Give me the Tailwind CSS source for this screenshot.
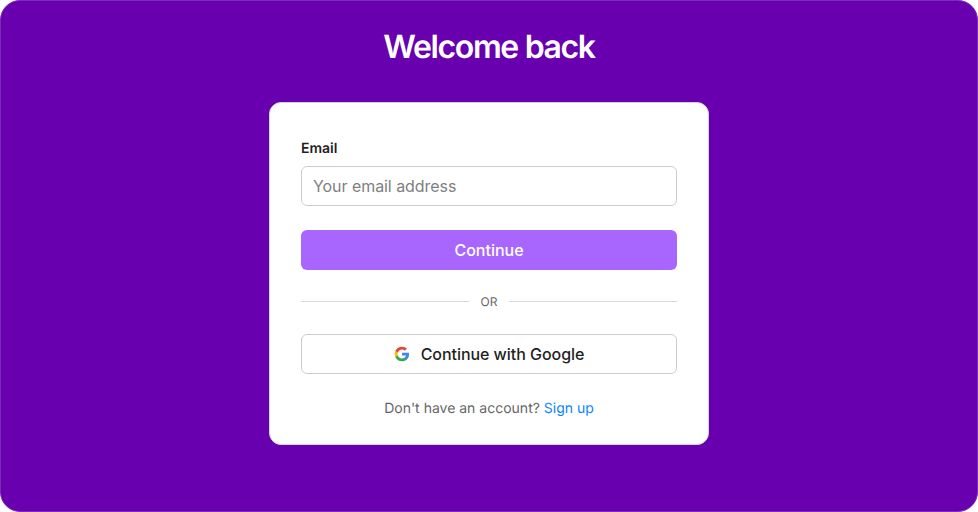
<!DOCTYPE html>
<html lang="en">
<head>
<meta charset="UTF-8" />
<title>Welcome back</title>
<script src="https://cdn.jsdelivr.net/npm/@tailwindcss/browser@4"></script>
</head>
<body class="bg-white font-['Inter',sans-serif] antialiased [text-rendering:geometricPrecision]">
<main class="w-[978px] h-[512px] rounded-[20px] bg-[#6800b0] border border-[#7a2bb8] flex flex-col items-center pt-[23px] overflow-hidden">
  <h1 class="text-[32px] leading-[46px] font-semibold tracking-[-1.36px] text-white">Welcome back</h1>
  <div class="w-[440px] h-[343px] mt-[32px] bg-white rounded-xl border border-[#d4d4d4] px-[31px] pt-[36px]">
    <label for="email" class="block text-sm leading-5 font-semibold text-[#1f1f1f]">Email</label>
    <input id="email" type="text" placeholder="Your email address" class="mt-[7px] block w-full h-10 px-[11px] rounded-md border border-[#cccccc] text-base tracking-[-0.06px] outline-none placeholder:text-[#808080]" />
    <button class="mt-6 block w-full h-10 rounded-md bg-[#a866ff] text-white text-base font-medium">Continue</button>
    <div class="mt-[21px] h-[20px] flex items-center gap-3 text-xs text-[#666666]">
      <span class="flex-1 h-px bg-[#d9d9d9]"></span>
      <span class="pt-[2px]">OR</span>
      <span class="flex-1 h-px bg-[#d9d9d9]"></span>
    </div>
    <button class="mt-[23px] w-full h-10 rounded-md border border-[#cccccc] bg-white flex items-center justify-center gap-[11px] text-base font-medium tracking-[-0.05px] text-[#1f1f1f]">
      <svg class="w-4 h-4" viewBox="0 0 24 24">
        <path fill="#4285F4" d="M22.56 12.25c0-.78-.07-1.53-.2-2.25H12v4.26h5.92c-.26 1.37-1.04 2.53-2.21 3.31v2.77h3.57c2.08-1.92 3.28-4.74 3.28-8.09z" />
        <path fill="#34A853" d="M12 23c2.97 0 5.46-.98 7.28-2.66l-3.57-2.77c-.98.66-2.23 1.06-3.71 1.06-2.86 0-5.29-1.93-6.16-4.53H2.18v2.84C3.99 20.53 7.7 23 12 23z" />
        <path fill="#FBBC05" d="M5.84 14.09c-.22-.66-.35-1.36-.35-2.09s.13-1.43.35-2.09V7.07H2.18C1.43 8.55 1 10.22 1 12s.43 3.45 1.18 4.93l2.85-2.22.81-.62z" />
        <path fill="#EA4335" d="M12 5.38c1.62 0 3.06.56 4.21 1.64l3.15-3.15C17.45 2.09 14.97 1 12 1 7.7 1 3.99 3.47 2.18 7.07l3.66 2.84c.87-2.6 3.3-4.53 6.16-4.53z" />
      </svg>
      <span>Continue with Google</span>
    </button>
    <p class="mt-[25px] text-sm leading-5 text-center text-[#666666]">Don't have an account? <a href="#" class="text-[#0a84ff]">Sign up</a></p>
  </div>
</main>
</body>
</html>
